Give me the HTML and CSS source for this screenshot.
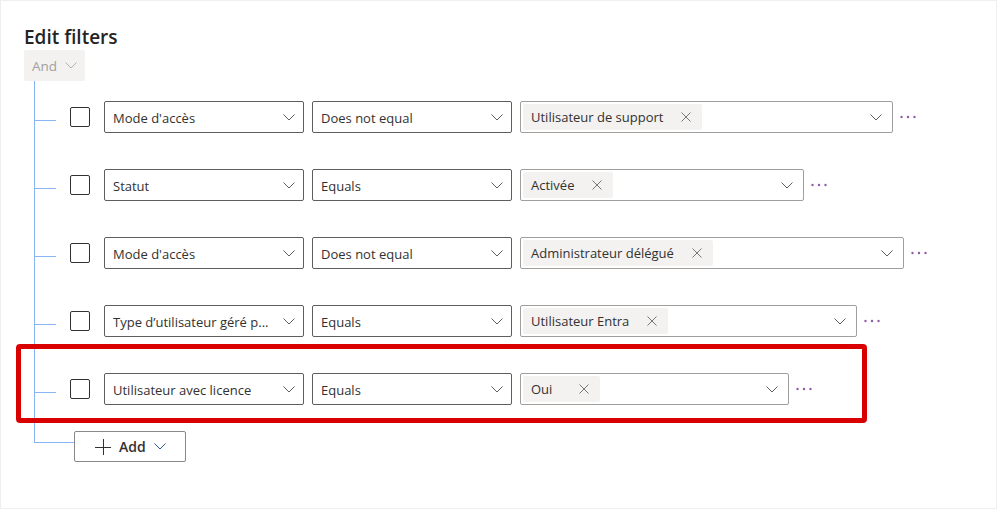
FILE: index.html
```html
<!DOCTYPE html>
<html lang="en">
<head>
<meta charset="utf-8">
<title>Edit filters</title>
<link rel="stylesheet" href="styles.css">
</head>
<body>
<div class="frame">
  <h1 class="title">Edit filters</h1>
  <button class="and-btn" type="button">And
    <svg class="chev" width="12" height="7" viewBox="0 0 12 7"><path d="M0.5 0.5 L6 6 L11.5 0.5" fill="none" stroke="#b3b0ad" stroke-width="1"/></svg>
  </button>

  <div class="tree">
    <div class="row">
      <span class="branch"></span>
      <span class="checkbox"></span>
      <div class="dropdown"><span class="value">Mode d'accès</span><svg class="chev" width="12" height="7" viewBox="0 0 12 7"><path d="M0.5 0.5 L6 6 L11.5 0.5" fill="none" stroke="#605e5c" stroke-width="1"/></svg></div>
      <div class="dropdown"><span class="value">Does not equal</span><svg class="chev" width="12" height="7" viewBox="0 0 12 7"><path d="M0.5 0.5 L6 6 L11.5 0.5" fill="none" stroke="#605e5c" stroke-width="1"/></svg></div>
      <div class="picker picker-1">
        <span class="tag">Utilisateur de support<svg class="x" width="10" height="10" viewBox="0 0 10 10"><path d="M0.5 0.5 L9.5 9.5 M9.5 0.5 L0.5 9.5" stroke="#797775" stroke-width="1"/></svg></span>
        <svg class="chev" width="12" height="7" viewBox="0 0 12 7"><path d="M0.5 0.5 L6 6 L11.5 0.5" fill="none" stroke="#605e5c" stroke-width="1"/></svg>
      </div>
      <svg class="more" width="16" height="4" viewBox="0 0 16 4"><circle cx="1.5" cy="2" r="1.2"/><circle cx="8" cy="2" r="1.2"/><circle cx="14.5" cy="2" r="1.2"/></svg>
    </div>

    <div class="row">
      <span class="branch"></span>
      <span class="checkbox"></span>
      <div class="dropdown"><span class="value">Statut</span><svg class="chev" width="12" height="7" viewBox="0 0 12 7"><path d="M0.5 0.5 L6 6 L11.5 0.5" fill="none" stroke="#605e5c" stroke-width="1"/></svg></div>
      <div class="dropdown"><span class="value">Equals</span><svg class="chev" width="12" height="7" viewBox="0 0 12 7"><path d="M0.5 0.5 L6 6 L11.5 0.5" fill="none" stroke="#605e5c" stroke-width="1"/></svg></div>
      <div class="picker picker-2">
        <span class="tag">Activée<svg class="x" width="10" height="10" viewBox="0 0 10 10"><path d="M0.5 0.5 L9.5 9.5 M9.5 0.5 L0.5 9.5" stroke="#797775" stroke-width="1"/></svg></span>
        <svg class="chev" width="12" height="7" viewBox="0 0 12 7"><path d="M0.5 0.5 L6 6 L11.5 0.5" fill="none" stroke="#605e5c" stroke-width="1"/></svg>
      </div>
      <svg class="more" width="16" height="4" viewBox="0 0 16 4"><circle cx="1.5" cy="2" r="1.2"/><circle cx="8" cy="2" r="1.2"/><circle cx="14.5" cy="2" r="1.2"/></svg>
    </div>

    <div class="row">
      <span class="branch"></span>
      <span class="checkbox"></span>
      <div class="dropdown"><span class="value">Mode d'accès</span><svg class="chev" width="12" height="7" viewBox="0 0 12 7"><path d="M0.5 0.5 L6 6 L11.5 0.5" fill="none" stroke="#605e5c" stroke-width="1"/></svg></div>
      <div class="dropdown"><span class="value">Does not equal</span><svg class="chev" width="12" height="7" viewBox="0 0 12 7"><path d="M0.5 0.5 L6 6 L11.5 0.5" fill="none" stroke="#605e5c" stroke-width="1"/></svg></div>
      <div class="picker picker-3">
        <span class="tag">Administrateur délégué<svg class="x" width="10" height="10" viewBox="0 0 10 10"><path d="M0.5 0.5 L9.5 9.5 M9.5 0.5 L0.5 9.5" stroke="#797775" stroke-width="1"/></svg></span>
        <svg class="chev" width="12" height="7" viewBox="0 0 12 7"><path d="M0.5 0.5 L6 6 L11.5 0.5" fill="none" stroke="#605e5c" stroke-width="1"/></svg>
      </div>
      <svg class="more" width="16" height="4" viewBox="0 0 16 4"><circle cx="1.5" cy="2" r="1.2"/><circle cx="8" cy="2" r="1.2"/><circle cx="14.5" cy="2" r="1.2"/></svg>
    </div>

    <div class="row">
      <span class="branch"></span>
      <span class="checkbox"></span>
      <div class="dropdown"><span class="value">Type d’utilisateur géré p...</span><svg class="chev" width="12" height="7" viewBox="0 0 12 7"><path d="M0.5 0.5 L6 6 L11.5 0.5" fill="none" stroke="#605e5c" stroke-width="1"/></svg></div>
      <div class="dropdown"><span class="value">Equals</span><svg class="chev" width="12" height="7" viewBox="0 0 12 7"><path d="M0.5 0.5 L6 6 L11.5 0.5" fill="none" stroke="#605e5c" stroke-width="1"/></svg></div>
      <div class="picker picker-4">
        <span class="tag">Utilisateur Entra<svg class="x" width="10" height="10" viewBox="0 0 10 10"><path d="M0.5 0.5 L9.5 9.5 M9.5 0.5 L0.5 9.5" stroke="#797775" stroke-width="1"/></svg></span>
        <svg class="chev" width="12" height="7" viewBox="0 0 12 7"><path d="M0.5 0.5 L6 6 L11.5 0.5" fill="none" stroke="#605e5c" stroke-width="1"/></svg>
      </div>
      <svg class="more" width="16" height="4" viewBox="0 0 16 4"><circle cx="1.5" cy="2" r="1.2"/><circle cx="8" cy="2" r="1.2"/><circle cx="14.5" cy="2" r="1.2"/></svg>
    </div>

    <div class="row">
      <span class="branch"></span>
      <span class="checkbox"></span>
      <div class="dropdown"><span class="value">Utilisateur avec licence</span><svg class="chev" width="12" height="7" viewBox="0 0 12 7"><path d="M0.5 0.5 L6 6 L11.5 0.5" fill="none" stroke="#605e5c" stroke-width="1"/></svg></div>
      <div class="dropdown"><span class="value">Equals</span><svg class="chev" width="12" height="7" viewBox="0 0 12 7"><path d="M0.5 0.5 L6 6 L11.5 0.5" fill="none" stroke="#605e5c" stroke-width="1"/></svg></div>
      <div class="picker picker-5">
        <span class="tag tag-short">Oui<svg class="x" width="10" height="10" viewBox="0 0 10 10"><path d="M0.5 0.5 L9.5 9.5 M9.5 0.5 L0.5 9.5" stroke="#797775" stroke-width="1"/></svg></span>
        <svg class="chev" width="12" height="7" viewBox="0 0 12 7"><path d="M0.5 0.5 L6 6 L11.5 0.5" fill="none" stroke="#605e5c" stroke-width="1"/></svg>
      </div>
      <svg class="more" width="16" height="4" viewBox="0 0 16 4"><circle cx="1.5" cy="2" r="1.2"/><circle cx="8" cy="2" r="1.2"/><circle cx="14.5" cy="2" r="1.2"/></svg>
    </div>
  </div>

  <div class="add-row">
    <span class="elbow"></span>
    <button class="add-btn" type="button">
      <svg class="plus" width="16" height="16" viewBox="0 0 16 16"><path d="M0 8.5 H16 M8.5 0 V16" stroke="#323130" stroke-width="1"/></svg>
      <span>Add</span>
      <svg class="chev" width="12" height="7" viewBox="0 0 12 7"><path d="M0.5 0.5 L6 6 L11.5 0.5" fill="none" stroke="#2b579a" stroke-width="1"/></svg>
    </button>
  </div>

  <div class="highlight"></div>
</div>
</body>
</html>
```

FILE: styles.css
```css
* { box-sizing: border-box; }

html, body {
  margin: 0;
  padding: 0;
  background: #ffffff;
}

body {
  font-family: "Open Sans", "Noto Sans", "Liberation Sans", sans-serif;
  color: #323130;
}

.frame {
  position: relative;
  width: 997px;
  height: 509px;
  border: 1px solid #efefef;
  padding: 0 0 0 23px;
}

.title {
  margin: 23px 0 0 0;
  font-size: 19px;
  line-height: 26px;
  font-weight: 600;
  color: #252423;
}

.and-btn {
  display: flex;
  align-items: center;
  gap: 8px;
  width: 61px;
  height: 31px;
  margin-top: 0;
  padding: 0 0 0 8px;
  border: none;
  border-radius: 2px;
  background: #f3f2f1;
  color: #a19f9d;
  font-family: inherit;
  font-size: 13.5px;
}

.tree {
  margin-left: 10px;
  padding-top: 20px;
  border-left: 1px solid #8ab4f8;
  display: flex;
  flex-direction: column;
  gap: 36px;
}

.row {
  display: flex;
  align-items: center;
  height: 32px;
}

.branch {
  width: 21px;
  height: 1px;
  margin-top: 6px;
  background: #8ab4f8;
  flex: none;
}

.checkbox {
  width: 20px;
  height: 20px;
  margin-left: 14px;
  margin-right: 14px;
  border: 1px solid #323130;
  border-radius: 2px;
  flex: none;
}

.dropdown {
  display: flex;
  align-items: center;
  justify-content: space-between;
  width: 200px;
  height: 32px;
  margin-right: 8px;
  padding: 1px 8px 0 8px;
  border: 1px solid #605e5c;
  border-radius: 2px;
  font-size: 13px;
  flex: none;
}

.dropdown .value {
  white-space: nowrap;
  overflow: hidden;
}

.chev { flex: none; display: block; }

.picker {
  display: flex;
  align-items: center;
  justify-content: space-between;
  height: 32px;
  padding: 2px 10px 2px 2px;
  border: 1px solid #a19f9d;
  border-radius: 2px;
  font-size: 13px;
  flex: none;
}

.picker-1 { width: 373px; }
.picker-2 { width: 284px; }
.picker-3 { width: 384px; }
.picker-4 { width: 337px; }
.picker-5 { width: 269px; }

.tag {
  display: flex;
  align-items: center;
  height: 26px;
  padding: 0 11px 0 8px;
  background: #f3f2f1;
  border-radius: 2px;
  white-space: nowrap;
}

.tag .x {
  margin-left: 18px;
  display: block;
}

.tag-short .x { margin-left: 27px; }

.more {
  margin-left: 7px;
  fill: #8f5aa8;
  flex: none;
}

.add-row {
  display: flex;
  align-items: flex-start;
  margin-left: 10px;
}

.elbow {
  width: 40px;
  height: 38px;
  border-left: 1px solid #8ab4f8;
  border-bottom: 1px solid #8ab4f8;
  flex: none;
}

.add-btn {
  display: flex;
  align-items: center;
  width: 112px;
  height: 31px;
  margin-top: 26px;
  padding: 0 0 0 20px;
  border: 1px solid #8a8886;
  border-radius: 2px;
  background: #ffffff;
  font-family: inherit;
  font-size: 14px;
  font-weight: 600;
  color: #323130;
}

.add-btn .plus { margin-right: 8px; display: block; }
.add-btn .chev { margin-left: 8px; }

.highlight {
  position: absolute;
  left: 15px;
  top: 343px;
  width: 851px;
  height: 79px;
  border: 5px solid #d90000;
  border-radius: 4px;
  pointer-events: none;
}
```
